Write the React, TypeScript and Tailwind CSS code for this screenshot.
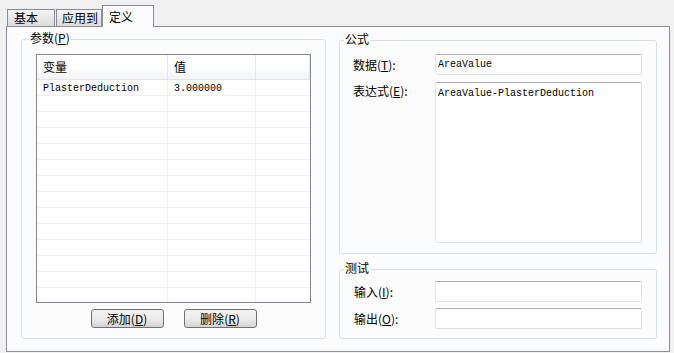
import React from 'react';

const cjk = "font-['Noto_Sans_CJK_SC','Noto_Sans',sans-serif]";
const mono = "font-['Liberation_Mono','DejaVu_Sans_Mono',monospace] text-[10px]";

function Hot({ k }: { k: string }) {
  return (
    <span>
      (<span className="underline underline-offset-1">{k}</span>)
    </span>
  );
}

function Group({ label, left, className, children }: { label: string; left: string; className: string; children: React.ReactNode }) {
  return (
    <div className={`relative border border-[#d5dfe5] rounded-[3px] ${className}`}>
      <span className={`absolute -top-[9px] ${left} px-[1px] bg-[#fcfcfc] leading-[14px] whitespace-nowrap`}>
        {label}
        {label === '参数' && <Hot k="P" />}
      </span>
      {children}
    </div>
  );
}

function Button({ text, k }: { text: string; k: string }) {
  return (
    <button className="w-[73px] h-[19px] border border-[#707070] rounded-[3px] bg-gradient-to-b from-[#f4f4f4] via-[#ebebeb] to-[#d4d4d4] flex items-center justify-center leading-none">
      {text}
      <Hot k={k} />
    </button>
  );
}

const rows = Array.from({ length: 14 }, (_, i) =>
  i === 0 ? { name: 'PlasterDeduction', value: '3.000000' } : { name: '', value: '' }
);

export default function App() {
  return (
    <div className={`w-[674px] h-[353px] bg-[#f0f0f0] text-[12px] text-black ${cjk}`}>
      {/* tabs */}
      <div className="flex items-end h-[26px] pl-[7px]">
        <div className="w-[48px] h-[17px] border border-b-0 border-[#898c95] bg-gradient-to-b from-[#f4f4f4] to-[#dcdcdc] flex items-center pl-[6px]">基本</div>
        <div className="ml-[1px] w-[46px] h-[17px] border border-b-0 border-[#898c95] bg-gradient-to-b from-[#f4f4f4] to-[#dcdcdc] flex items-center pl-[5px]">应用到</div>
        <div className="relative z-10 -mb-px w-[52px] h-[22px] border border-b-0 border-[#898c95] bg-[#fcfcfc] flex items-center pl-[6px]">定义</div>
      </div>

      {/* tab page */}
      <div className="ml-[6px] w-[664px] h-[326px] border border-[#898c95] bg-[#fcfcfc] flex gap-[13px] pl-[14px] pt-[12px]">
        <Group label="参数" left="left-[7px]" className="w-[305px] h-[300px] pt-[14px] px-[14px] pb-[10px] flex flex-col">
          <div className="w-[275px] h-[249px] border border-[#828790] bg-white overflow-hidden flex flex-col">
            <div className="flex h-[25px] shrink-0 bg-gradient-to-b from-white via-white to-[#f1f2f4] border-b border-[#e5e5e5]">
              <div className="w-[131px] border-r border-[#e3e8ee] flex items-center pl-[6px]">变量</div>
              <div className="w-[88px] border-r border-[#e3e8ee] flex items-center pl-[6px]">值</div>
              <div className="w-[54px] border-r border-[#e3e8ee]" />
            </div>
            {rows.map((r, i) => (
              <div key={i} className="flex h-[16px] shrink-0 border-b border-[#f0f0f0]">
                <div className={`w-[131px] border-r border-[#f0f0f0] pl-[6px] pt-[2px] flex items-center ${mono}`}>{r.name}</div>
                <div className={`w-[88px] border-r border-[#f0f0f0] pl-[6px] pt-[2px] flex items-center ${mono}`}>{r.value}</div>
                <div className="w-[53px]" />
              </div>
            ))}
          </div>
          <div className="mt-[6px] flex justify-center gap-[20px]">
            <Button text="添加" k="D" />
            <Button text="删除" k="R" />
          </div>
        </Group>

        <div className="mt-[1px] w-[318px] flex flex-col gap-[15px]">
          <Group label="公式" left="left-[4px]" className="h-[214px] pt-[13px] pl-[13px] pr-[14px] flex flex-col gap-[7px]">
            <div className="flex items-center">
              <div className="w-[82px]">数据<Hot k="T" />:</div>
              <div className={`w-[207px] h-[21px] border border-[#e2e3ea] border-t-[#abadb3] rounded-[2px] bg-white pl-[2px] flex items-center ${mono}`}>AreaValue</div>
            </div>
            <div className="flex items-start">
              <div className="w-[82px]">表达式<Hot k="E" />:</div>
              <div className={`w-[207px] h-[161px] border border-[#e2e3ea] border-t-[#abadb3] rounded-[2px] bg-white pl-[2px] pt-[3px] ${mono}`}>AreaValue-PlasterDeduction</div>
            </div>
          </Group>

          <Group label="测试" left="left-[4px]" className="h-[70px] pt-[11px] pl-[13px] pr-[14px] flex flex-col gap-[6px]">
            <div className="flex items-center">
              <div className="w-[82px] pl-[1px]">输入<Hot k="I" />:</div>
              <div className="w-[207px] h-[21px] border border-[#e2e3ea] border-t-[#abadb3] rounded-[2px] bg-white" />
            </div>
            <div className="flex items-center">
              <div className="w-[82px] pl-[1px]">输出<Hot k="O" />:</div>
              <div className="w-[207px] h-[21px] border border-[#e2e3ea] border-t-[#abadb3] rounded-[2px] bg-white" />
            </div>
          </Group>
        </div>
      </div>
    </div>
  );
}
